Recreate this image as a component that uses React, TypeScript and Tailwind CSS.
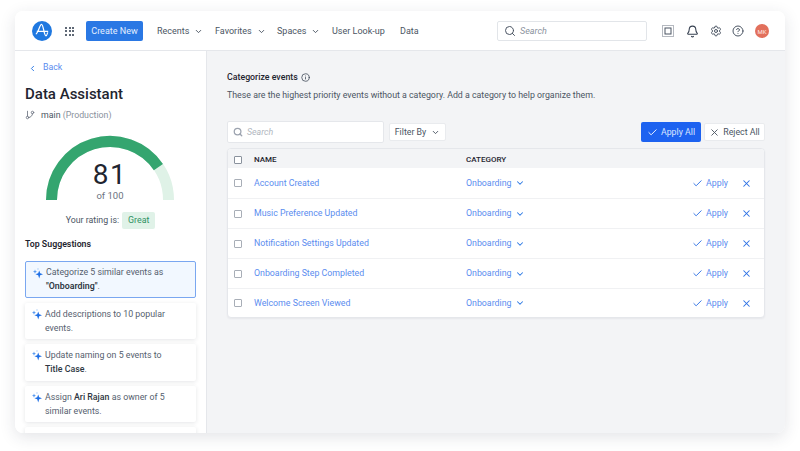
import React from "react";
import { Check, ChevronDown, ChevronLeft, GitBranch, Search, Bell, Settings, CircleHelp, X, Info } from "lucide-react";

const font = { fontFamily: '"Roboto", "Liberation Sans", sans-serif' };

function Spark() {
  return (
    <svg width="10" height="11" viewBox="0 0 10 11" className="shrink-0">
      <path d="M6.2 2.5 L7.2 5.3 L10 6.3 L7.2 7.3 L6.2 10.5 L5.2 7.3 L2.4 6.3 L5.2 5.3 Z" fill="#1f6fe5" />
      <path d="M2 1.5 L2.6 3 L4 3.6 L2.6 4.2 L2 5.7 L1.4 4.2 L0 3.6 L1.4 3 Z" fill="#5b9cf0" />
      <path d="M5 0 L5.3 0.7 L6 1 L5.3 1.3 L5 2 L4.7 1.3 L4 1 L4.7 0.7 Z" fill="#8ab8f5" />
    </svg>
  );
}

function NavItem({ label, chevron = true, className = "" }: { label: string; chevron?: boolean; className?: string }) {
  return (
    <div className={`flex items-center gap-[5px] text-[9px] text-[#4b5563] whitespace-nowrap shrink-0 ${className}`}>
      <span className="pt-[1px]">{label}</span>
      {chevron && <ChevronDown size={9} strokeWidth={2.5} />}
    </div>
  );
}

function Suggestion({ children, active = false }: { children: React.ReactNode; active?: boolean }) {
  return (
    <div
      className={`flex gap-[3px] pl-[7px] pr-[8px] h-[36.5px] items-center rounded-[2px] text-[8.8px] leading-[14px] text-[#55606e] shrink-0 ${
        active ? "bg-[#f2f8ff] border border-[#7aa7f0]" : "bg-white shadow-[0_1px_4px_rgba(30,40,60,0.12)]"
      }`}
    >
      <div className="self-start pt-[6px]">
        <Spark />
      </div>
      <div>{children}</div>
    </div>
  );
}

const rows = [
  "Account Created",
  "Music Preference Updated",
  "Notification Settings Updated",
  "Onboarding Step Completed",
  "Welcome Screen Viewed",
];

export default function App() {
  return (
    <div className="w-[800px] h-[451px] bg-white pt-[11px] pl-[15px] overflow-hidden" style={font}>
      <div className="w-[770px] h-[422px] rounded-[8px] overflow-hidden flex flex-col bg-white shadow-[0_4px_16px_rgba(40,50,70,0.13)]">
        <header className="h-[40px] shrink-0 flex items-center border-b border-[#e5e7eb] bg-white pl-[17px] pt-[1px]">
          <svg width="20" height="20" viewBox="0 0 21 21" className="shrink-0">
            <circle cx="10.5" cy="10.5" r="10.5" fill="#1f78e0" />
            <path d="M4 13.5 C6.5 13.2 8 3.5 10 3.5 C12 3.5 12.5 15 14.5 15.5 C15.5 15.7 16 13.5 16.5 12 M5 11 H17" fill="none" stroke="#fff" strokeWidth="1.3" />
          </svg>
          <div className="grid grid-cols-3 gap-[1.5px] ml-[13px] w-[9px] shrink-0">
            {Array.from({ length: 9 }).map((_, i) => (
              <div key={i} className="w-[2px] h-[2px] bg-[#5f6875]" />
            ))}
          </div>
          <div className="ml-[12px] w-[57px] h-[20px] pt-[1px] shrink-0 rounded-[2px] bg-[#2a78e4] text-[#e3eeff] text-[9px] flex items-center justify-center whitespace-nowrap">Create New</div>
          <NavItem label="Recents" className="ml-[14px] w-[58px]" />
          <NavItem label="Favorites" className="w-[62px]" />
          <NavItem label="Spaces" className="w-[55px]" />
          <NavItem label="User Look-up" chevron={false} className="w-[68px]" />
          <NavItem label="Data" chevron={false} className="w-[97px]" />
          <div className="w-[150px] h-[20px] rounded-[2px] border border-[#e2e5e9] flex items-center pl-[6px] gap-[4px] shrink-0">
            <Search size={12} className="text-[#4b5563]" />
            <span className="text-[9px] italic text-[#8a929d] pt-[1px]">Search</span>
          </div>
          <svg width="12" height="12" viewBox="0 0 12 12" className="ml-[15px] shrink-0">
            <rect x="0.5" y="0.5" width="11" height="11" fill="none" stroke="#6b7280" strokeDasharray="1 1" />
            <rect x="3" y="3" width="6" height="6" fill="none" stroke="#4b5563" />
          </svg>
          <Bell size={13} className="ml-[12px] text-[#374151] shrink-0" />
          <Settings size={12} className="ml-[11px] text-[#4b5563] shrink-0" />
          <CircleHelp size={12} className="ml-[10px] text-[#4b5563] shrink-0" />
          <div className="ml-[11px] w-[14px] h-[14px] shrink-0 rounded-full bg-[#e2705c] text-[#ffe9e4] text-[6px] flex items-center justify-center">MK</div>
        </header>

        <div className="flex flex-1 min-h-0">
          <aside className="w-[192px] shrink-0 bg-white border-r border-[#e5e7eb] pl-[10px] pr-[10px] overflow-hidden flex flex-col">
            <div className="flex items-center gap-[6px] text-[8.8px] text-[#5b8def] mt-[11px] h-[12px] pl-[3px]">
              <ChevronLeft size={9} strokeWidth={2.5} className="text-[#2a78e4]" />
              <span>Back</span>
            </div>
            <div className="text-[15px] font-medium text-[#1f2530] mt-[10px] leading-[20px] whitespace-nowrap">Data Assistant</div>
            <div className="flex items-center gap-[6px] text-[8.8px] mt-[5px] leading-[12px]">
              <GitBranch size={10} className="text-[#6b7280]" />
              <span className="text-[#4b5563]">
                main <span className="text-[#8a929d]">(Production)</span>
              </span>
            </div>
            <div className="relative w-[130px] h-[66px] ml-[20px] mt-[14px] shrink-0">
              <svg width="130" height="66" viewBox="0 0 130 66">
                <path d="M6.5 65 A58.5 58.5 0 0 1 123.5 65" fill="none" stroke="#dff2e7" strokeWidth="11" />
                <path d="M6.5 65 A58.5 58.5 0 0 1 113.4 32.1" fill="none" stroke="#34a56f" strokeWidth="11" />
              </svg>
              <div className="absolute left-0 right-0 top-[25px] text-center text-[28px] leading-[30px] tracking-[1.5px] text-[#1f2530]">81</div>
              <div className="absolute left-0 right-0 top-[55px] text-center text-[9.5px] leading-[12px] text-[#6b7280]">of 100</div>
            </div>
            <div className="flex items-center justify-center gap-[3px] mt-[11px] text-[8.8px] text-[#4b5563]">
              <span>Your rating is:</span>
              <span className="h-[17px] px-[6px] rounded-[2px] bg-[#e0f2e8] text-[#2f9163] flex items-center">Great</span>
            </div>
            <div className="text-[8.8px] font-semibold text-[#1f2530] mt-[9px] leading-[12px]">Top Suggestions</div>
            <div className="flex flex-col gap-[5px] mt-[11px]">
              <Suggestion active>
                Categorize 5 similar events as <br />
                <b className="font-semibold text-[#2f3742]">"Onboarding"</b>.
              </Suggestion>
              <Suggestion>
                Add descriptions to 10 popular <br />
                events.
              </Suggestion>
              <Suggestion>
                Update naming on 5 events to <br />
                <b className="font-medium text-[#2f3742]">Title Case</b>.
              </Suggestion>
              <Suggestion>
                Assign <b className="font-medium text-[#2f3742]">Ari Rajan</b> as owner of 5 <br />
                similar events.
              </Suggestion>
              <Suggestion>&nbsp;</Suggestion>
            </div>
          </aside>

          <main className="flex-1 bg-[#f3f4f6] pl-[20px] pr-[20px] min-w-0">
            <div className="flex items-center gap-[3px] mt-[20px] h-[12px] pt-[1px] text-[8.8px] font-medium text-[#1f2530]">
              Categorize events <Info size={9} className="text-[#374151]" />
            </div>
            <div className="mt-[6px] text-[8.8px] leading-[12px] text-[#4b5563] whitespace-nowrap">
              These are the highest priority events without a category. Add a category to help organize them.
            </div>
            <div className="flex items-center mt-[20px] h-[22px]">
              <div className="w-[157px] h-[22px] rounded-[2px] bg-white border border-[#e5e7eb] flex items-center pl-[5px] gap-[4px]">
                <Search size={10} strokeWidth={3} className="text-[#9ca3af]" />
                <span className="text-[8.8px] italic text-[#b0b6be] pt-[1px]">Search</span>
              </div>
              <div className="ml-[5px] w-[57px] h-[18px] rounded-[2px] bg-white border border-[#e9ebee] flex items-center justify-center gap-[5px] text-[8.8px] text-[#4b5563]">
                <span className="pt-[1px]">Filter By</span> <ChevronDown size={9} strokeWidth={2.5} />
              </div>
              <div className="ml-auto w-[60px] h-[20px] rounded-[2px] bg-[#1d62f0] flex items-center justify-center gap-[3px] text-[8.8px] text-[#dbe6ff]">
                <Check size={11} className="text-white" /> <span className="pt-[1px]">Apply All</span>
              </div>
              <div className="ml-[3px] w-[61px] h-[18px] rounded-[2px] bg-white border border-[#e9ebee] flex items-center justify-center gap-[3px] text-[8.8px] text-[#4b5563]">
                <X size={11} /> <span className="pt-[1px]">Reject All</span>
              </div>
            </div>
            <div className="mt-[5px] rounded-[4px] border border-[#e5e7eb] overflow-hidden bg-white shadow-[0_1px_2px_rgba(30,40,60,0.06)]">
              <div className="h-[19px] bg-[#f3f4f6] flex items-center pl-[6px] pt-[2px] text-[8px] font-medium text-[#1f2530]">
                <div className="w-[8px] h-[8px] border border-[#8a929d] rounded-[1px] bg-white shrink-0" />
                <div className="ml-[12px] w-[212px]">NAME</div>
                <div>CATEGORY</div>
              </div>
              {rows.map((r, i) => (
                <div key={r} className={`flex items-center pl-[6px] text-[8.8px] text-[#5b8def] ${i ? "border-t border-[#f0f1f3]" : ""} ${i === 4 ? "h-[29px]" : "h-[30px]"}`}>
                  <div className="w-[8px] h-[8px] border border-[#a8aeb7] rounded-[1px] shrink-0" />
                  <div className="ml-[12px] w-[212px] pt-[1px]">{r}</div>
                  <div className="flex items-center gap-[4px]">
                    <span className="pt-[1px]">Onboarding</span> <ChevronDown size={10} strokeWidth={2.5} className="text-[#2a78e4]" />
                  </div>
                  <div className="ml-auto flex items-center gap-[3px]">
                    <Check size={11} className="text-[#2a6fe4]" /> <span className="pt-[1px]">Apply</span>
                  </div>
                  <X size={11} strokeWidth={2.2} className="ml-[13px] mr-[12px] text-[#2a6fe4]" />
                </div>
              ))}
            </div>
          </main>
        </div>
      </div>
    </div>
  );
}
